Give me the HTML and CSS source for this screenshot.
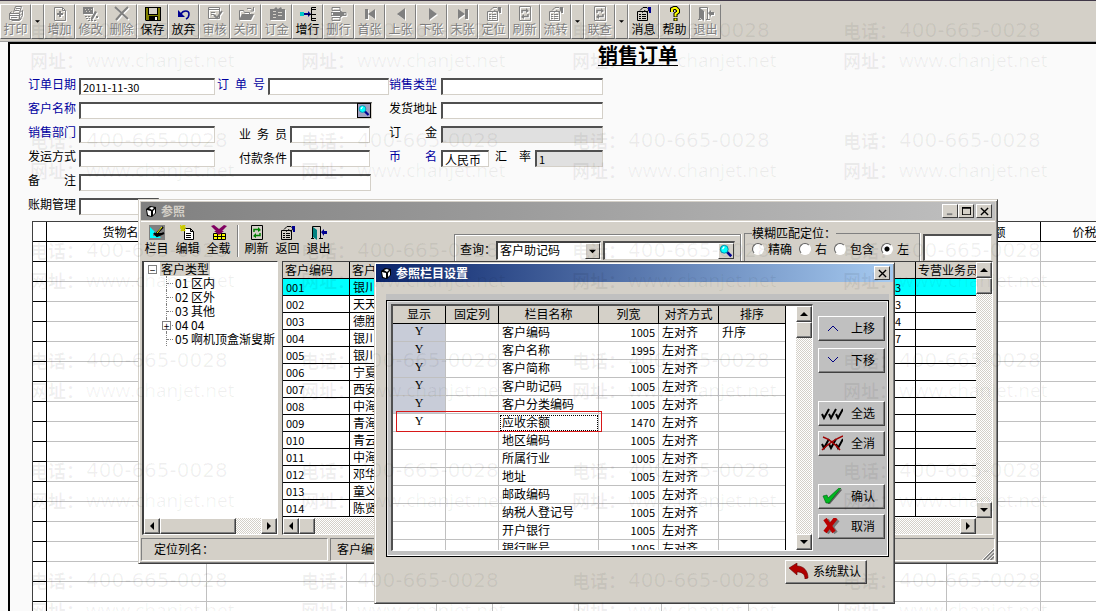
FILE: index.html
```html
<!DOCTYPE html>
<html lang="zh-CN">

<head>
    <meta charset="UTF-8">
    <meta name="viewport" content="width=device-width, initial-scale=1.0">
    <title>销售订单</title>
    <link rel="stylesheet" href="styles.css">
</head>

<body>
    <svg class="sprite" aria-hidden="true">
        <symbol id="i-print" viewBox="0 0 16 16"><path fill="none" stroke="currentColor" d="M5.500 6.500L7.500 .5h6l-2 6M8 2.500h4M7 4.500h4M1.500 7.500l2-2M11.500 6.500l3-2v5l-3 4h-10v-6h10v6M1.500 9.500h10M3 11.500h6M14 7.500l-3 3M3.500 14.500h8l2-2"/></symbol>
        <symbol id="i-add" viewBox="0 0 16 16"><path fill="none" stroke="currentColor" d="M2.500 1.500h8l3 3v10h-11zM10.500 1.500v3h3"/><path fill="currentColor" d="M7 5h2v2h2v2H9v2H7V9H5V7h2z"/></symbol>
        <symbol id="i-edit" viewBox="0 0 16 16"><path fill="currentColor" d="M0 1h10v7H0zM12 5l2 1-4 7-2 2v-3zM13 10h2v2h-2z"/><path fill="#d4d0c8" d="M2 3h1v1H2zM5 3h1v1H5zM8 3h1v1H8zM3 5h1v1H3zM6 5h1v1H6z"/><path stroke="currentColor" stroke-dasharray="2 1" d="M2 10.500h5M3 12.500h4M5 14.500h9"/></symbol>
        <symbol id="i-del" viewBox="0 0 16 16"><path fill="none" stroke="currentColor" stroke-width="2" d="M1 1l13 12M14 1L8 7l-6 7"/></symbol>
        <symbol id="i-save" viewBox="0 0 16 16"><path d="M0 1h16v14H1l-1-1z"/><path fill="#808000" d="M1 2h2v7h10V2h2v12H1z"/><path fill="#d4d0c8" d="M4 2h8v6H4z"/><path d="M4 10h9v5H4z"/><path fill="#fff" d="M10 11h2v3h-2z"/></symbol>
        <symbol id="i-undo" viewBox="0 0 16 16"><path fill="#000090" d="M2 4v7h7z"/><path fill="none" stroke="#000090" stroke-width="1.500" d="M5 8c2-4 8-4 8 0 0 2-1 4-3 5"/></symbol>
        <symbol id="i-check" viewBox="0 0 16 16"><path fill="none" stroke="currentColor" d="M1.500 1.500h11v11h-11zM2 3.500h10M4 6.500h4M4 8.500h3"/><path fill="none" stroke="currentColor" stroke-width="2" d="M7 9l3 3 5-7"/></symbol>
        <symbol id="i-close" viewBox="0 0 16 16"><path fill="none" stroke="currentColor" d="M1.500 13.500v-9h4l1 2h5v2M9 2.500h4l2 2M15.500 1v4h-3"/><path fill="currentColor" d="M4 8h12l-3 6H1z"/></symbol>
        <symbol id="i-money" viewBox="0 0 16 16"><path fill="currentColor" d="M1 3h4l2-2 2 2 3-2 1 2h3v11H1z"/><path stroke="#d4d0c8" d="M4 5.500h3M9 6.500h4M4 8.500h3M9 9.500h4M4 11.500h3"/></symbol>
        <symbol id="i-addrow" viewBox="0 0 16 16"><path fill="#00c8c8" d="M0 6h4v4H0z"/><path fill="#000090" d="M4 7h4V5l3 3-3 3V9H4z"/><path fill="none" stroke="#000" d="M16 1.500h-4.500v13H16M8 8.500h8M12 3.500h4M12 12.500h4"/></symbol>
        <symbol id="i-delrow" viewBox="0 0 16 16"><path fill="none" stroke="currentColor" d="M1 1.500h8v3H1zM1 11.500h8v3H1zM0 6.500h15v3H0z"/><path fill="currentColor" d="M2 7h8v2H2zM9 4l5 4-5 4z"/></symbol>
        <symbol id="i-first" viewBox="0 0 16 16"><path fill="currentColor" d="M3 3h3v10H3zM13 3v10L6 8z"/></symbol>
        <symbol id="i-prev" viewBox="0 0 16 16"><path fill="currentColor" d="M12 2v12L4 8z"/></symbol>
        <symbol id="i-next" viewBox="0 0 16 16"><path fill="currentColor" d="M5 2v12l8-6z"/></symbol>
        <symbol id="i-last" viewBox="0 0 16 16"><path fill="currentColor" d="M10 3h3v10h-3zM3 3v10l7-5z"/></symbol>
        <symbol id="i-prop" viewBox="0 0 16 16"><path fill="none" stroke="currentColor" d="M1.500 5.500h10v9h-10zM3 8.500h2M6 8.500h4M3 10.500h2M6 10.500h4M3 12.500h2M6 12.500h4M4 4.500l3-3h4l2 2-2 3-2-2-3 2"/><path class="accent" d="M12 1h3v6h-2V4h-1z"/></symbol>
        <symbol id="i-refresh" viewBox="0 0 16 16"><path fill="none" stroke="currentColor" d="M2.500 .5h11v14h-11z"/><path class="accent-line" fill="none" stroke-width="1.500" d="M5 7V4.500h5.500M11 8v2.500H5.500"/><path class="accent" d="M9 2l3 3-3 2zM7 8l-3 3 3 2z"/></symbol>
        <symbol id="i-help" viewBox="0 0 16 16"><path fill="none" stroke="#000" stroke-width="4" d="M5 6V3l2-1h2l2 2v2L8.500 8v3M8.500 12v3"/><path fill="none" stroke="#ff0" stroke-width="2" d="M5 6V3l2-1h2l2 2v2L8.500 8v2.500M8.500 12.500v2"/></symbol>
        <symbol id="i-exit" viewBox="0 0 16 16"><path fill="none" stroke="currentColor" d="M0 13.500h3M1.500 13V1.500h8V14M8 13.500h4"/><path class="door" d="M2 2l4 3v10l-4-3z"/><path class="accent" d="M10 7l3-3v2h3v3h-3v2z"/></symbol>
        <symbol id="i-column" viewBox="0 0 16 16"><path fill="#808080" d="M0 0h16v15H0z"/><path fill="#0ff" d="M1 2v11h11z"/><path fill="#808080" d="M4 8v3h3z"/><path stroke="#000" stroke-width="2" d="M6 10l8-8M5 8l3 3 7-3"/><path stroke="#ff0" d="M8 8l5-6"/></symbol>
        <symbol id="i-new" viewBox="0 0 16 16"><path fill="#fff" stroke="#000" d="M4.500 3.500h6l3 3v8h-9zM10.500 3.500v3h3M6 8.500h5M6 10.500h5M6 12.500h5"/><path stroke="#cc0" stroke-width="1.500" d="M0 0l5 6M5 0L1 6M0 3h6M3 0v6"/></symbol>
        <symbol id="i-load" viewBox="0 0 16 16"><path fill="#ff0" stroke="#000" d="M2.500 8.500h12v6h-12zM3 11.500h11M6.500 9v5M10.500 9v5"/><path fill="#800060" d="M0 1l3-1 5 4 5-4 3 1-5 5h2l-5 4-5-4h2z"/></symbol>
        <symbol id="i-find" viewBox="0 0 16 16"><path stroke="#000090" stroke-width="3" d="M9 9l5 5"/><circle cx="6" cy="6" r="4.500" fill="#0ff" stroke="#0080a0"/><path stroke="#fff" stroke-width="1.500" d="M4 6l2-3"/></symbol>
        <symbol id="i-app" viewBox="0 0 12 12"><path fill="#000" d="M1 4l4-3 6 1v6l-4 4-5-1z"/><path fill="#fff" d="M2 5l4 1v5l-3-1zM4 3l3-1 2 1-2 2zM8 6l2-2v4L8 10z"/></symbol>
        <symbol id="i-up" viewBox="0 0 22 16"><path fill="none" stroke="#000080" d="M7 11l5-5 5 5"/></symbol>
        <symbol id="i-down" viewBox="0 0 22 16"><path fill="none" stroke="#000080" d="M7 5l5 5 5-5"/></symbol>
        <symbol id="i-all" viewBox="0 0 22 16"><path fill="none" stroke="#000" stroke-width="2" d="M1 9l2 4 5-9M8 9l2 4 5-9M15 9l2 4 5-9"/></symbol>
        <symbol id="i-none" viewBox="0 0 22 16"><path fill="none" stroke="#000" stroke-width="2" d="M1 9l2 4 5-9M8 9l2 4 5-9M15 9l2 4 5-9"/><path fill="none" stroke="#a00000" stroke-width="1.500" d="M2 2c6 2 12 7 17 13M22 1C15 4 7 9 1 15"/></symbol>
        <symbol id="i-ok" viewBox="0 0 22 16"><path fill="#606060" d="M4 9l3 2L20 1l1 1-12 14H7z"/><path fill="#00b820" stroke="#006010" stroke-width=".6" d="M2 8l4-1 1 3L18 0h2L8 15H5z"/></symbol>
        <symbol id="i-cancel" viewBox="0 0 22 16"><path stroke="#777" stroke-width="4" d="M6 2l9 13M17 2L6 15"/><path stroke="#b80000" stroke-width="4" d="M4 1l9 13M15 0L4 14"/></symbol>
        <symbol id="i-reset" viewBox="0 0 22 16"><path fill="#b00000" stroke="#600000" stroke-width=".6" d="M1 5l8-5v3c7 0 11 5 11 12l-3 1c0-5-3-7-8-7v3z"/></symbol>
        <symbol id="a-left" viewBox="0 0 8 8"><path d="M6 0v8L2 4z"/></symbol>
        <symbol id="a-right" viewBox="0 0 8 8"><path d="M2 0v8l4-4z"/></symbol>
        <symbol id="a-up" viewBox="0 0 8 8"><path d="M0 6h8L4 2z"/></symbol>
        <symbol id="a-down" viewBox="0 0 8 8"><path d="M0 2h8L4 6z"/></symbol>
        <symbol id="w-min" viewBox="0 0 10 10"><path fill="#808080" d="M1 7h6v2H1z"/></symbol>
        <symbol id="w-max" viewBox="0 0 10 10"><path d="M0 0h10v9H0zM1 2v6h8V2z" fill-rule="evenodd"/></symbol>
        <symbol id="w-close" viewBox="0 0 10 10"><path stroke="#000" stroke-width="1.500" d="M1 1l8 8M9 1L1 9"/></symbol>
    </svg>

    <nav class="toolbar" id="toolbar"></nav>

    <main class="sheet">
        <h1>销售订单</h1>
        <form class="order">
            <div class="fields left">
                <div class="row">
                    <label class="key" for="date">订单日期</label>
                    <input class="box mid num" type="text" id="date" value="2011-11-30">
                    <label class="key near" for="orderno">订 单 号</label>
                    <input class="box grow" type="text" id="orderno">
                </div>
                <div class="row">
                    <label class="key" for="customer">客户名称</label>
                    <div class="lookup grow">
                        <input class="box grow" type="text" id="customer">
                        <button type="button" class="pick" aria-label="选择客户"><svg><use href="#i-find"/></svg></button>
                    </div>
                </div>
                <div class="row">
                    <label class="key" for="dept">销售部门</label>
                    <input class="box mid" type="text" id="dept">
                    <label class="far" for="clerk">业 务 员</label>
                    <input class="box short" type="text" id="clerk">
                </div>
                <div class="row">
                    <label for="ship">发运方式</label>
                    <input class="box mid" type="text" id="ship">
                    <label class="far" for="terms">付款条件</label>
                    <input class="box short" type="text" id="terms">
                </div>
                <div class="row">
                    <label for="remark">备 注</label>
                    <input class="box long" type="text" id="remark">
                </div>
                <div class="row">
                    <label for="period">账期管理</label>
                    <input class="box short" type="text" id="period">
                </div>
            </div>
            <div class="fields right">
                <div class="row">
                    <label class="key" for="type">销售类型</label>
                    <input class="box grow" type="text" id="type">
                </div>
                <div class="row">
                    <label for="addr">发货地址</label>
                    <input class="box grow" type="text" id="addr">
                </div>
                <div class="row">
                    <label for="deposit">订 金</label>
                    <input class="box grow" type="text" id="deposit" disabled>
                </div>
                <div class="row">
                    <label class="key" for="currency">币 名</label>
                    <input class="box tiny" type="text" id="currency" value="人民币">
                    <label class="rate" for="rate">汇 率</label>
                    <input class="box grow num" type="text" id="rate" value="1" disabled>
                </div>
            </div>
        </form>

        <div class="goods-wrap">
            <table class="goods">
                <colgroup>
                    <col class="g0"><col class="g1"><col class="g2"><col class="g3"><col class="g4"><col class="g5">
                    <col class="g6"><col class="g7"><col class="g8"><col class="g9"><col class="g10"><col class="g11">
                </colgroup>
                <thead>
                    <tr><th></th><th>货物名称</th><th></th><th></th><th></th><th></th><th></th><th></th><th></th><th></th><th>金额</th><th>价税合计</th></tr>
                </thead>
                <tbody id="goods"></tbody>
            </table>
        </div>
    </main>

    <section class="window ref">
        <header class="titlebar inactive">
            <svg class="app"><use href="#i-app"/></svg>
            <h2>参照</h2>
            <button type="button" class="wbtn" aria-label="最小化"><svg><use href="#w-min"/></svg></button>
            <button type="button" class="wbtn" aria-label="最大化"><svg><use href="#w-max"/></svg></button>
            <button type="button" class="wbtn last" aria-label="关闭"><svg><use href="#w-close"/></svg></button>
        </header>
        <div class="tools">
            <button type="button" class="tool"><svg><use href="#i-column"/></svg>栏目</button>
            <button type="button" class="tool"><svg><use href="#i-new"/></svg>编辑</button>
            <button type="button" class="tool"><svg><use href="#i-load"/></svg>全载</button>
            <span class="sep"></span>
            <button type="button" class="tool green"><svg><use href="#i-refresh"/></svg>刷新</button>
            <button type="button" class="tool"><svg><use href="#i-prop"/></svg>返回</button>
            <button type="button" class="tool"><svg><use href="#i-exit"/></svg>退出</button>
            <div class="query">
                <label for="field">查询：</label>
                <div class="combo">
                    <select id="field"><option>客户助记码</option></select>
                    <span class="arrow"><svg><use href="#a-down"/></svg></span>
                </div>
                <div class="lookup">
                    <input class="box grow" type="text" aria-label="查询内容">
                    <button type="button" class="pick gray" aria-label="查找"><svg><use href="#i-find"/></svg></button>
                </div>
            </div>
            <fieldset class="match">
                <legend>模糊匹配定位：</legend>
                <div class="options">
                    <label><input type="radio" name="match">精确</label>
                    <label><input type="radio" name="match">右</label>
                    <label><input type="radio" name="match">包含</label>
                    <label><input type="radio" name="match" checked>左</label>
                </div>
            </fieldset>
            <input class="box locate" type="text" aria-label="定位内容">
        </div>
        <div class="panes">
            <div class="pane tree">
                <div class="tree-body">
                    <div class="root"><span class="knob">−</span><span class="picked">客户类型</span></div>
                    <ul>
                        <li>01 区内</li>
                        <li>02 区外</li>
                        <li>03 其他</li>
                        <li><span class="knob">+</span>04 04</li>
                        <li>05 啊机顶盒渐叟斯</li>
                    </ul>
                </div>
                <div class="scroll">
                    <button type="button" aria-label="向左"><svg><use href="#a-left"/></svg></button>
                    <span class="thumb wide"></span>
                    <button type="button" class="end" aria-label="向右"><svg><use href="#a-right"/></svg></button>
                </div>
            </div>
            <div class="pane list">
                <div class="list-top">
                    <div class="list-view">
                        <table class="customers">
                            <colgroup><col class="c-code"><col><col class="c-tel"><col class="c-clerk"></colgroup>
                            <thead>
                                <tr><th>客户编码</th><th>客户名称</th><th></th><th>专营业务员</th></tr>
                            </thead>
                            <tbody id="customers"></tbody>
                        </table>
                    </div>
                    <div class="scroll vertical">
                        <button type="button" aria-label="向上"><svg><use href="#a-up"/></svg></button>
                        <span class="thumb"></span>
                        <button type="button" class="end" aria-label="向下"><svg><use href="#a-down"/></svg></button>
                    </div>
                </div>
                <div class="scroll corner">
                    <button type="button" aria-label="向左"><svg><use href="#a-left"/></svg></button>
                    <span class="thumb"></span>
                    <button type="button" class="end" aria-label="向右"><svg><use href="#a-right"/></svg></button>
                </div>
            </div>
        </div>
        <footer class="status">
            <span class="cell first">定位列名：</span>
            <span class="cell">客户编码
                <svg class="grip" viewBox="0 0 14 14"><path stroke="#808080" stroke-width="2" d="M2 14L14 2M6 14l8-8M10 14l4-4"/><path stroke="#fff" d="M0 14L14 0M4 14L14 4M8 14l6-6"/></svg>
            </span>
        </footer>
    </section>

    <section class="window setup">
        <header class="titlebar">
            <svg class="app"><use href="#i-app"/></svg>
            <h2>参照栏目设置</h2>
            <button type="button" class="wbtn" aria-label="关闭"><svg><use href="#w-close"/></svg></button>
        </header>
        <div class="strip"></div>
        <div class="panel">
            <div class="grid-box">
                <div class="grid-view">
                    <table class="columns">
                        <colgroup><col class="k1"><col class="k1"><col class="k2"><col class="k3"><col class="k3"><col class="k4"></colgroup>
                        <thead>
                            <tr><th>显示</th><th>固定列</th><th>栏目名称</th><th>列宽</th><th>对齐方式</th><th>排序</th></tr>
                        </thead>
                        <tbody id="columns"></tbody>
                    </table>
                </div>
                <div class="scroll vertical">
                    <button type="button" aria-label="向上"><svg><use href="#a-up"/></svg></button>
                    <span class="thumb"></span>
                    <button type="button" class="end" aria-label="向下"><svg><use href="#a-down"/></svg></button>
                </div>
                <span class="mark"></span>
            </div>
            <div class="actions">
                <div class="pair roomy">
                    <button type="button" class="push"><svg><use href="#i-up"/></svg>上移</button>
                    <button type="button" class="push"><svg><use href="#i-down"/></svg>下移</button>
                </div>
                <div class="pair">
                    <button type="button" class="push"><svg><use href="#i-all"/></svg>全选</button>
                    <button type="button" class="push"><svg><use href="#i-none"/></svg>全消</button>
                </div>
                <div class="pair">
                    <button type="button" class="push"><svg><use href="#i-ok"/></svg>确认</button>
                    <button type="button" class="push"><svg><use href="#i-cancel"/></svg>取消</button>
                </div>
            </div>
        </div>
        <button type="button" class="push reset"><svg><use href="#i-reset"/></svg>系统默认</button>
    </section>

    <div class="watermark" id="watermark" aria-hidden="true"></div>

    <script>
        // [text, icon, enabled], '' is a drop-down arrow
        let tools = [
            ['打印', 'print'], '', ['增加', 'add'], ['修改', 'edit'], ['删除', 'del'], ['保存', 'save', 1],
            ['放弃', 'undo', 1], ['审核', 'check'], ['关闭', 'close'], ['订金', 'money'], ['增行', 'addrow', 1],
            ['删行', 'delrow'], ['首张', 'first'], ['上张', 'prev'], ['下张', 'next'], ['末张', 'last'],
            ['定位', 'prop'], ['刷新', 'refresh'], ['流转', 'prop'], '', ['联查', 'refresh'], '',
            ['消息', 'prop', 1], ['帮助', 'help', 1], ['退出', 'exit']
        ]

        document.querySelector('#toolbar').innerHTML = tools.map(t => t
            ? `<button type="button" ${t[2] ? '' : 'disabled'}><svg><use href="#i-${t[1]}"/></svg>${t[0]}</button>`
            : '<button type="button" class="drop" aria-label="更多"><svg><use href="#a-down"/></svg></button>').join('')

        document.querySelector('#goods').innerHTML = ('<tr>' + '<td></td>'.repeat(12) + '</tr>').repeat(19)

        let names = ['银川', '天天', '德胜', '银川', '银川', '宁夏', '西安', '中海', '青海', '青云', '中海', '邓华', '童义', '陈贤']
        let tails = ['3', '3', '4', '7']

        document.querySelector('#customers').innerHTML = names.map((name, i) =>
            `<tr><td class="num">${String(i + 1).padStart(3, '0')}</td><td>${name}</td><td class="num tel">${tails[i] || ''}</td><td></td></tr>`).join('')

        let columns = [
            ['Y', '客户编码', 1005, '升序'], ['Y', '客户名称', 1995], ['Y', '客户简称', 1005], ['Y', '客户助记码', 1005],
            ['Y', '客户分类编码', 1005], ['Y', '应收余额', 1470], ['', '地区编码', 1005], ['', '所属行业', 1005],
            ['', '地址', 1005], ['', '邮政编码', 1005], ['', '纳税人登记号', 1005], ['', '开户银行', 1005], ['', '银行账号', 1005]
        ]

        document.querySelector('#columns').innerHTML = columns.map(c =>
            `<tr class="${c[1] == '应收余额' ? 'current' : c[0] ? 'shown' : ''}"><td class="yes">${c[0]}</td><td></td><td>${c[1]}</td><td class="num">${c[2]}</td><td>左对齐</td><td>${c[3] || ''}</td></tr>`).join('')

        document.querySelector('#watermark').innerHTML =
            '<p><span>电话：</span><b class="phone">400-665-0028</b><span>网址：</span><b>www.chanjet.net</b></p>'.repeat(24)
    </script>
</body>

</html>
```
FILE: styles.css
```css
* {
    box-sizing: border-box;
}

body {
    margin: 0;
    height: 100vh;
    overflow: hidden;
    position: relative;
    display: flex;
    flex-direction: column;
    background-color: #fafafa;
    color: #000000;
    font-family: "Noto Sans CJK SC", sans-serif;
    font-size: 12px;
    line-height: 14px;
}

button,
input,
select {
    font: inherit;
    color: inherit;
    margin: 0;
    padding: 0;
}

svg {
    width: 16px;
    height: 16px;
    display: block;
    flex: none;
}

.sprite {
    position: absolute;
    width: 0;
    height: 0;
}

.accent {
    fill: var(--accent, currentColor);
}

.accent-line {
    stroke: var(--accent, currentColor);
}

.door {
    fill: var(--door, currentColor);
}

.num {
    font-size: 11px;
}

/* main toolbar */

.toolbar {
    display: flex;
    height: 42px;
    flex: none;
    padding-top: 3px;
    background-color: #d4d0c8;
    border-top: 1px solid #403848;
    border-bottom: 1px solid #a0a0a0;
    overflow: hidden;
}

.toolbar button {
    width: 31px;
    height: 35px;
    flex: none;
    padding-top: 1px;
    display: flex;
    flex-direction: column;
    align-items: center;
    white-space: nowrap;
    background-color: #d4d0c8;
    border: 1px solid;
    border-color: #ffffff #808080 #606060 #ffffff;
    --accent: #000090;
}

.toolbar button:disabled {
    color: #808080;
    text-shadow: 1px 1px #ffffff;
    --accent: #808080;
}

.toolbar button:disabled svg {
    filter: drop-shadow(1px 1px 0 #ffffff);
}

.toolbar .drop {
    width: 13px;
    justify-content: center;
    padding: 0;
}

.toolbar .drop svg {
    width: 5px;
    height: 5px;
}

/* order form */

.sheet {
    flex: 1;
    min-height: 0;
    margin-left: 8px;
    border: solid #000000;
    border-width: 2px 0 0 2px;
    overflow: hidden;
}

h1 {
    margin: 0 0 12px;
    padding-left: 170px;
    font-size: 20px;
    line-height: 22px;
    text-align: center;
    text-decoration: underline;
    text-decoration-thickness: 1px;
    text-underline-offset: 2px;
}

.order {
    display: flex;
    padding-left: 18px;
    margin-bottom: 6px;
}

.fields {
    display: flex;
    flex-direction: column;
    gap: 7px;
}

.left {
    width: 361px;
}

.right {
    width: 214px;
}

.row {
    display: flex;
    height: 17px;
}

.row label {
    width: 48px;
    margin-right: 3px;
    line-height: 12px;
    text-align-last: justify;
}

.right .row label {
    margin-right: 4px;
}

.row .key {
    color: #0000a0;
}

.row .near {
    margin-left: 2px;
}

.row .far {
    margin: 2px 3px 0 24px;
}

.right .row .rate {
    width: 36px;
    margin-left: 6px;
}

.box {
    min-width: 0;
    height: 17px;
    padding: 0 2px;
    background-color: #ffffff;
    border: solid;
    border-width: 2px 1px 1px 2px;
    border-color: #505050 #d4d0c8 #d4d0c8 #505050;
    border-radius: 0;
}

.box:disabled {
    background-color: #e0e0e0;
    color: #000000;
}

.grow {
    flex: 1;
}

.mid {
    width: 136px;
}

.short {
    width: 80px;
}

.long {
    width: 292px;
}

.tiny {
    width: 48px;
}

.lookup {
    display: flex;
    min-width: 0;
    position: relative;
}

.row .lookup {
    margin-right: 17px;
}

.pick {
    position: absolute;
    right: 1px;
    top: 1px;
    width: 14px;
    height: 15px;
    background-color: #a0a0c0;
    border: 1px solid #000000;
}

.pick svg {
    width: 100%;
    height: 100%;
}

.pick.gray {
    top: 2px;
    width: 16px;
    height: 16px;
    background-color: #d4d0c8;
    border-color: #ffffff #404040 #404040 #ffffff;
}

/* goods table */

table {
    table-layout: fixed;
    border-collapse: separate;
    border-spacing: 0;
}

th,
td {
    padding: 0;
    font-weight: normal;
    white-space: nowrap;
    overflow: hidden;
}

.goods-wrap {
    margin-left: 22px;
    overflow: hidden;
}

.goods {
    width: 1121px;
    background-color: #ffffff;
    border: solid #404040;
    border-width: 1px 0 0 1px;
}

.goods th {
    height: 20px;
    border: solid #000000;
    border-width: 0 1px 1px 0;
}

.goods td {
    height: 20px;
    border: solid #c0c0c0;
    border-width: 0 1px 1px 0;
}

.goods td:first-child {
    border-color: #000000;
}

.g0 { width: 14px; }
.g1 { width: 160px; }
.g2 { width: 140px; }
.g3 { width: 90px; }
.g4 { width: 56px; }
.g5 { width: 86px; }
.g6 { width: 83px; }
.g7 { width: 87px; }
.g8 { width: 90px; }
.g9 { width: 108px; }
.g10 { width: 94px; }
.g11 { width: 112px; }

/* windows */

.window {
    position: absolute;
    display: flex;
    flex-direction: column;
    background-color: #d4d0c8;
    border: 1px solid;
    border-color: #d4d0c8 #404040 #404040 #d4d0c8;
    box-shadow: inset 1px 1px #ffffff, inset -1px -1px #808080;
}

.titlebar {
    display: flex;
    align-items: center;
    height: 18px;
    flex: none;
    padding: 0 3px 0 4px;
    background: linear-gradient(to right, #0a246a, #a6caf0);
    color: #ffffff;
}

.titlebar.inactive {
    background: linear-gradient(to right, #808080, #c0c0c0);
    color: #d4d0c8;
}

.titlebar h2 {
    flex: 1;
    margin: 0 0 0 4px;
    font-size: 12px;
    line-height: 16px;
}

.app {
    width: 12px;
    height: 12px;
}

.wbtn {
    width: 16px;
    height: 14px;
    display: flex;
    align-items: center;
    justify-content: center;
    background-color: #d4d0c8;
    border: 1px solid;
    border-color: #ffffff #404040 #404040 #ffffff;
}

.wbtn svg {
    width: 9px;
    height: 9px;
}

.wbtn.last {
    margin-left: 2px;
}

.ref {
    left: 138px;
    top: 199px;
    width: 860px;
    height: 365px;
    padding: 2px;
}

.tools {
    display: flex;
    height: 40px;
    flex: none;
    margin-top: 1px;
    border-top: 1px solid #ffffff;
    padding-right: 3px;
    align-items: flex-end;
}

.tool {
    width: 31px;
    height: 36px;
    flex: none;
    display: flex;
    flex-direction: column;
    align-items: center;
    background: none;
    border: none;
    white-space: nowrap;
    --accent: #000090;
    --door: #008080;
}

.tool.green {
    --accent: #008000;
}

.sep {
    width: 2px;
    height: 32px;
    margin: 0 2px 4px 3px;
    background-color: #808080;
    border-right: 1px solid #ffffff;
}

.query {
    display: flex;
    align-items: flex-start;
    width: 287px;
    height: 27px;
    margin-left: auto;
    padding: 6px 5px 0 5px;
    border: 1px solid #808080;
    border-bottom: none;
    box-shadow: inset 1px 1px #ffffff, 1px 0 #ffffff;
}

.query label {
    line-height: 16px;
    white-space: nowrap;
}

.combo {
    position: relative;
    width: 105px;
    flex: none;
    margin-right: 2px;
}

.combo select {
    appearance: none;
    width: 100%;
    height: 19px;
    padding: 0 2px 2px;
    line-height: 14px;
    background-color: #ffffff;
    border: solid;
    border-width: 2px 1px 1px 2px;
    border-color: #404040 #ffffff #ffffff #404040;
    border-radius: 0;
}

.combo .arrow {
    position: absolute;
    right: 1px;
    top: 2px;
    width: 15px;
    height: 16px;
    padding: 4px 3px;
    background-color: #d4d0c8;
    border: 1px solid;
    border-color: #ffffff #404040 #404040 #ffffff;
    pointer-events: none;
}

.arrow svg {
    width: 7px;
    height: 7px;
}

.query .lookup {
    flex: 1;
}

.query .box {
    width: 100%;
    height: 19px;
}

.match {
    width: 176px;
    height: 35px;
    margin: 0 3px 0 3px;
    padding: 2px 7px 0;
    border: 1px solid #808080;
    border-bottom: none;
    box-shadow: 1px 0 #ffffff;
}

.match legend {
    padding: 0;
}

.options {
    display: flex;
    gap: 7px;
}

.options label {
    display: flex;
    align-items: center;
    gap: 4px;
    white-space: nowrap;
}

.options input {
    appearance: none;
    width: 12px;
    height: 12px;
    border: 1px solid;
    border-color: #606060 #ffffff #ffffff #606060;
    border-radius: 50%;
    background-color: #ffffff;
}

.options input:checked {
    background: radial-gradient(#000000 2px, #ffffff 3px);
}

.locate {
    width: 69px;
    height: 27px;
}

.panes {
    display: flex;
    gap: 4px;
    flex: 1;
    min-height: 0;
    padding: 0 2px 0 1px;
}

.pane {
    display: flex;
    flex-direction: column;
    background-color: #ffffff;
    border: 1px solid;
    border-color: #404040 #ffffff #ffffff #404040;
    overflow: hidden;
}

.tree {
    width: 136px;
    flex: none;
    border-left-width: 2px;
}

.tree-body {
    flex: 1;
    overflow: hidden;
    white-space: nowrap;
}

.root {
    display: flex;
    align-items: center;
    gap: 3px;
    padding-left: 4px;
}

.knob {
    width: 9px;
    height: 9px;
    border: 1px solid #808080;
    background-color: #ffffff;
    font-size: 10px;
    line-height: 7px;
    text-align: center;
}

.picked {
    padding: 0 1px;
    background-color: #d4d0c8;
}

.tree ul {
    margin: 0 0 0 22px;
    padding: 0;
    list-style: none;
}

.tree li {
    position: relative;
    display: flex;
    align-items: center;
    border-left: 1px dotted #808080;
}

.tree li::before {
    content: "";
    width: 6px;
    margin-right: 2px;
    border-top: 1px dotted #808080;
}

.tree li .knob {
    position: absolute;
    left: -5px;
}

.list {
    flex: 1;
    min-width: 0;
}

.list-top {
    flex: 1;
    min-height: 0;
    display: flex;
}

.list-view {
    flex: 1;
    min-width: 0;
    overflow: hidden;
}

.customers {
    width: 100%;
}

.customers th,
.customers td {
    height: 17px;
    padding-left: 3px;
    line-height: 14px;
    text-align: left;
    border: solid #000000;
    border-width: 0 1px 1px 0;
}

.customers th {
    padding-left: 2px;
    background-color: #d4d0c8;
}

.customers tr > :last-child {
    border-right: none;
}

.customers tbody tr:first-child td {
    background-color: #00ffff;
}

.customers .tel {
    padding-right: 14px;
    text-align: right;
}

.c-code { width: 67px; }
.c-tel { width: 60px; }
.c-clerk { width: 60px; }

/* scroll bars */

.scroll {
    display: flex;
    flex: none;
    height: 16px;
    background: repeating-conic-gradient(#ffffff 0 25%, #d4d0c8 0 50%) 0 0 / 2px 2px;
}

.scroll.vertical {
    flex-direction: column;
    width: 16px;
    height: auto;
}

.scroll.corner {
    border-right: 16px solid #d4d0c8;
}

.scroll button,
.thumb {
    width: 16px;
    height: 16px;
    flex: none;
    display: flex;
    align-items: center;
    justify-content: center;
    background-color: #d4d0c8;
    border: 1px solid;
    border-color: #ffffff #404040 #404040 #ffffff;
    box-shadow: inset -1px -1px #808080;
}

.scroll svg {
    width: 8px;
    height: 8px;
}

.scroll .end {
    margin-left: auto;
}

.vertical .end {
    margin: auto 0 0;
}

.thumb.wide {
    width: 76px;
}

.status {
    display: flex;
    gap: 2px;
    height: 23px;
    flex: none;
    margin-top: 3px;
}

.cell {
    position: relative;
    flex: 1;
    padding-left: 6px;
    line-height: 20px;
    border: 1px solid;
    border-color: #808080 #ffffff #ffffff #808080;
}

.cell.first {
    flex: none;
    width: 187px;
    padding-left: 12px;
}

.grip {
    position: absolute;
    right: 0;
    bottom: 0;
    width: 12px;
    height: 12px;
}

/* column setup window */

.setup {
    left: 374px;
    top: 262px;
    width: 521px;
    height: 342px;
    padding: 1px;
}

.strip {
    height: 6px;
    flex: none;
    margin: 12px 4px 0 10px;
    background-color: #c0c0c0;
}

.panel {
    display: flex;
    gap: 5px;
    height: 257px;
    flex: none;
    margin: 0 4px 3px 10px;
    padding: 3px 3px 5px 4px;
    background-color: #c0c0c0;
    border: 1px solid #000000;
    box-shadow: inset 1px 1px #e8e8e8, inset -1px -1px #ffffff;
}

.grid-box {
    position: relative;
    flex: 1;
    min-width: 0;
    display: flex;
    justify-content: space-between;
    background-color: #ffffff;
    border: solid;
    border-width: 2px 1px 1px 2px;
    border-color: #505050 #ffffff #ffffff #505050;
}

.grid-view {
    width: 393px;
    border-right: 1px solid #000000;
    overflow: hidden;
}

.columns {
    width: 393px;
}

.columns th {
    height: 18px;
    padding-bottom: 2px;
    background-color: #d4d0c8;
    border: solid #000000;
    border-width: 0 1px 1px 0;
}

.columns td {
    height: 18px;
    padding: 0 3px 1px;
    border: solid #c0c0c0;
    border-width: 0 1px 1px 0;
}

.columns .num {
    text-align: right;
}

.columns .yes {
    padding-bottom: 3px;
    font-family: "Liberation Serif", serif;
    text-align: center;
}

.shown .yes {
    background-color: #c8ccd8;
}

.current td:nth-child(3) {
    outline: 1px dotted #000000;
    outline-offset: -2px;
}

.mark {
    position: absolute;
    left: 3px;
    top: 105px;
    width: 206px;
    height: 21px;
    border: 1px solid #d81818;
}

.k1 { width: 53px; }
.k2 { width: 100px; }
.k3 { width: 60px; }
.k4 { width: 67px; }

.actions {
    width: 67px;
    flex: none;
    display: flex;
    flex-direction: column;
    gap: 28px;
    padding-top: 12px;
}

.pair {
    display: flex;
    flex-direction: column;
    gap: 5px;
}

.pair.roomy {
    gap: 7px;
}

.push {
    display: flex;
    align-items: center;
    justify-content: space-between;
    height: 25px;
    padding: 0 9px 2px 2px;
    background-color: #c0c0c0;
    border: 1px solid;
    border-color: #ffffff #404040 #404040 #ffffff;
    box-shadow: inset -1px -1px #808080;
    white-space: nowrap;
}

.push svg {
    width: 22px;
}

.reset {
    align-self: flex-end;
    width: 82px;
    height: 24px;
    margin-right: 26px;
    padding-right: 5px;
    background-color: #d4d0c8;
}

/* watermark over the whole screen */

.watermark {
    position: absolute;
    inset: 0;
    overflow: hidden;
    display: grid;
    grid-template-columns: repeat(auto-fill, 271px);
    grid-auto-rows: 110px;
    pointer-events: none;
    color: rgba(0, 0, 0, 0.06);
}

.watermark p {
    display: grid;
    grid-template-columns: 56px 1fr;
    align-content: start;
    margin: 0;
    padding: 15px 0 0 30px;
    font-size: 18px;
    font-weight: bold;
    line-height: 30px;
    white-space: nowrap;
}

.watermark b {
    font-family: "Open Sans", sans-serif;
    font-size: 19px;
    font-weight: 500;
}

.watermark .phone {
    font-family: "DejaVu Sans", sans-serif;
    font-size: 20px;
}
```
